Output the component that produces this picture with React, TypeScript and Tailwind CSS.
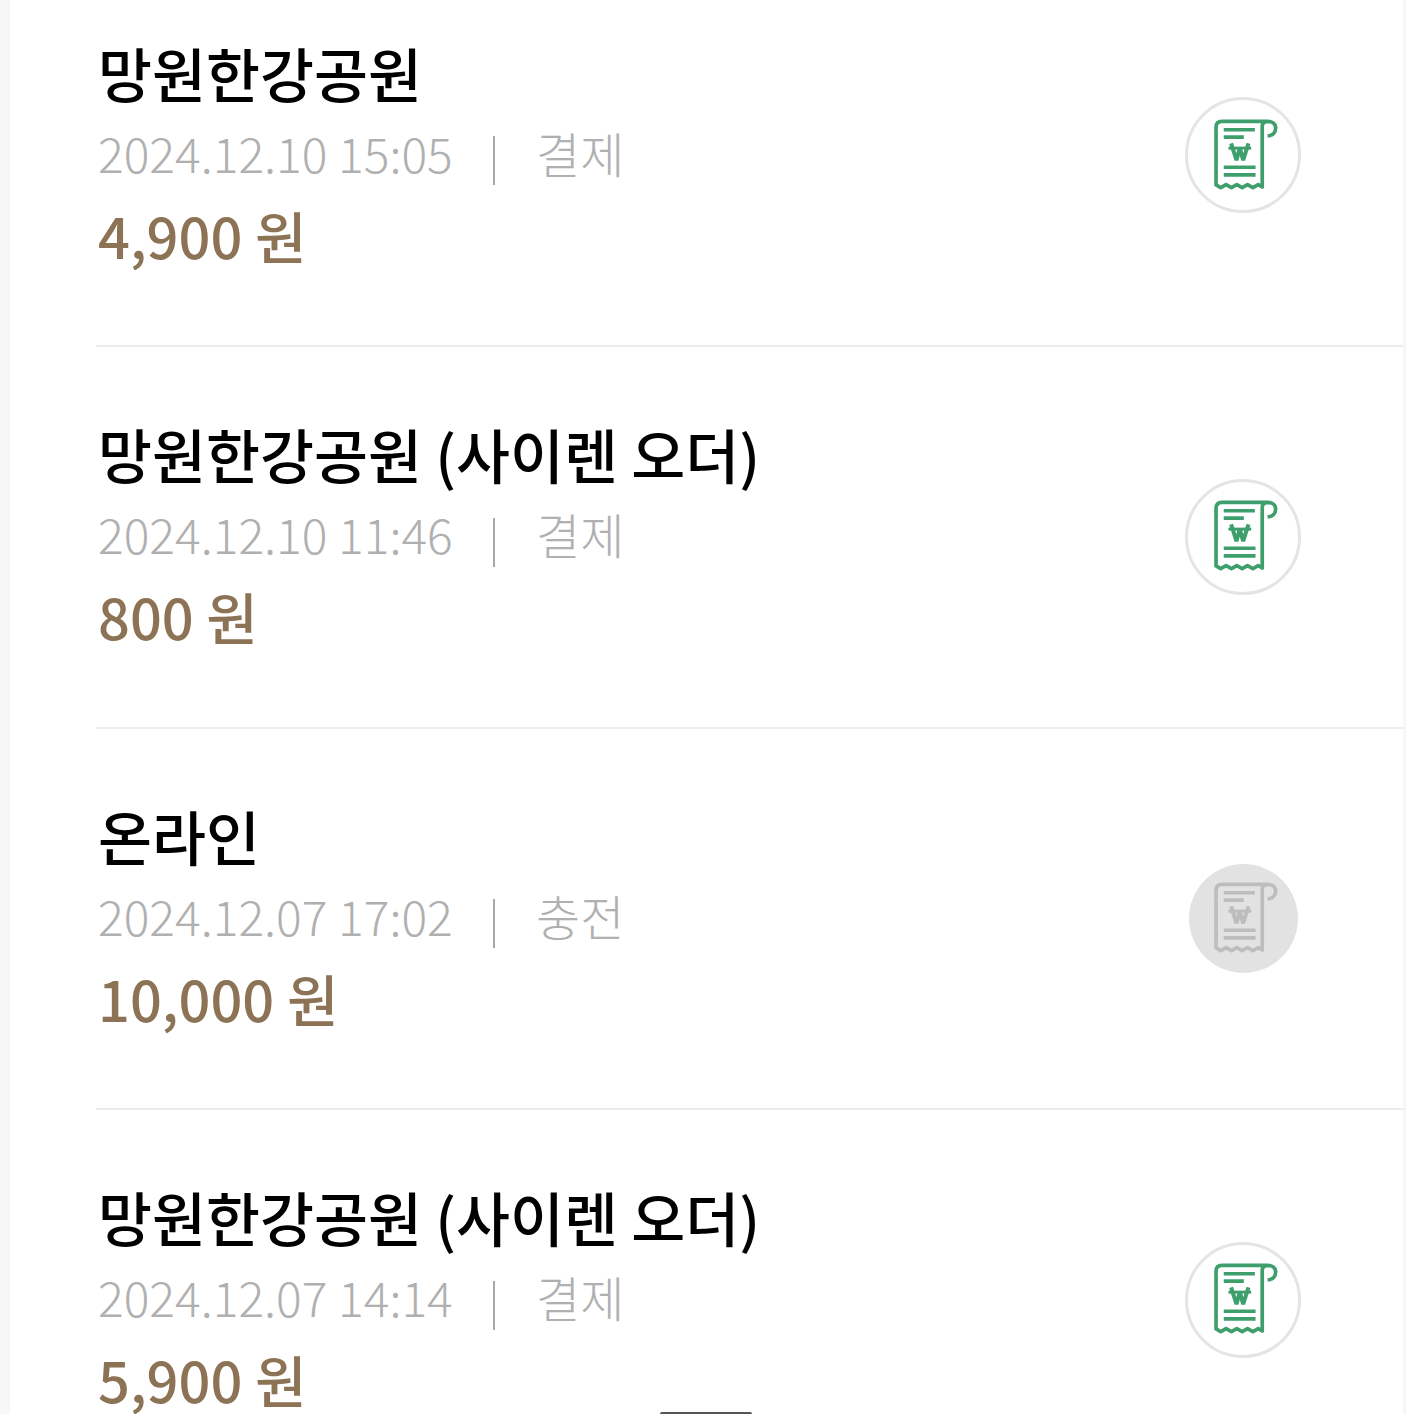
const rows = [
  { title: "망원한강공원", date: "2024.12.10 15:05", kind: "결제", amount: "4,900 원", active: true },
  { title: "망원한강공원 (사이렌 오더)", date: "2024.12.10 11:46", kind: "결제", amount: "800 원", active: true },
  { title: "온라인", date: "2024.12.07 17:02", kind: "충전", amount: "10,000 원", active: false },
  { title: "망원한강공원 (사이렌 오더)", date: "2024.12.07 14:14", kind: "결제", amount: "5,900 원", active: true },
]

function ReceiptIcon({ color }: { color: string }) {
  return (
    <svg className="ml-[4px]" width="67" height="77" viewBox="130 95 200 230" fill="none" stroke={color} strokeWidth="11">
      <path d="M296 151 C312 151 320 140 320 128 C320 115 310 108 296 108 H160 Q142 108 142 126 V298 L156 306 L172 297 L188 306 L204 297 L220 306 L236 297 L252 306 L268 297 L280 304 V122 Q280 110 296 108" strokeLinejoin="round" />
      <path d="M165 133 H258 M165 155 H225 M165 245 H260 M165 268 H260" />
      <path d="M187 174 L203 224 L213 188 L223 224 L239 174" strokeWidth="12" strokeLinejoin="bevel" />
      <path d="M179 188 H247" strokeWidth="9" />
    </svg>
  )
}

function Row({ title, date, kind, amount, active }: (typeof rows)[number]) {
  return (
    <div className="h-[381.5px] ml-[86px] border-b-2 border-[#ececec] flex items-center justify-between">
      <div className="flex flex-col pb-[1px] pl-[2px]">
        <div className="text-[58.7px] leading-[79px] font-medium text-black">{title}</div>
        <div className="flex items-center text-[48px] leading-[81px] font-light text-[#b0b0b0]">
          <span className="w-[395px]">{date}</span>
          <span className="w-[43px] h-[49px] mt-[17px] border-l-2 border-[#a8a8a8]" />
          <span>{kind}</span>
        </div>
        <div className="text-[56px] leading-[84px] font-medium text-[#8d7355]">{amount}</div>
      </div>
      {active ? (
        <div className="w-[116px] h-[116px] mr-[102px] rounded-full border-[3px] border-[#e4e4e4] bg-white flex items-center justify-center">
          <ReceiptIcon color="#3f9f6c" />
        </div>
      ) : (
        <div className="w-[109px] h-[109px] mr-[105px] rounded-full bg-[#e2e2e2] flex items-center justify-center">
          <ReceiptIcon color="#bdbdbd" />
        </div>
      )}
    </div>
  )
}

export default function App() {
  return (
    <div className="relative h-[1414px] w-[1406px] overflow-hidden bg-[#f7f7f7] pl-[10px] pr-[3px] font-['Noto_Sans_CJK_KR','Noto_Sans',sans-serif]">
      <div className="bg-white h-full overflow-hidden">
        <div className="-mt-[34.5px]">
          {rows.map((row) => (
            <Row key={row.date} {...row} />
          ))}
        </div>
      </div>
      <div className="absolute bottom-0 left-[660px] w-[92px] h-[2px] rounded-t-full bg-[#555555]" />
    </div>
  )
}
